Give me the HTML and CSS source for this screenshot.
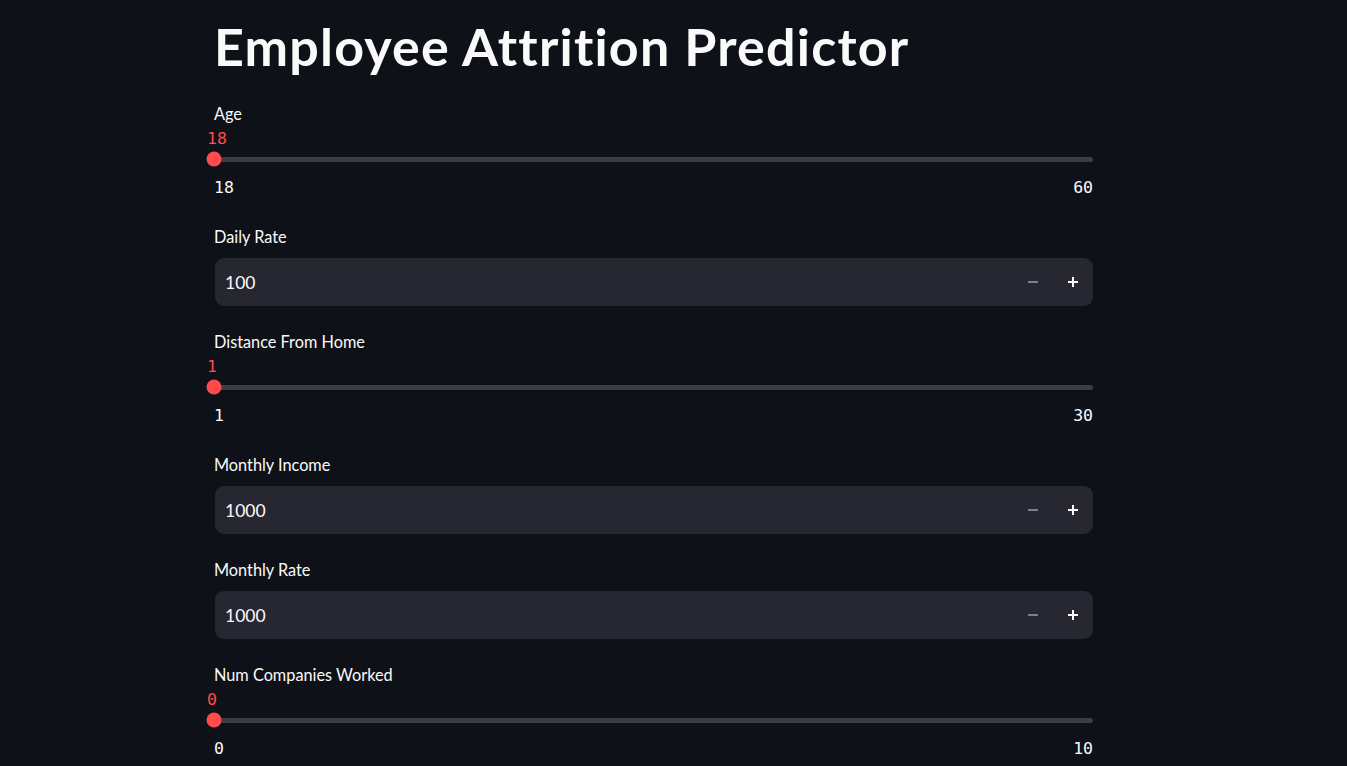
FILE: index.html
```html
<!DOCTYPE html>
<html lang="en">
<head>
<meta charset="utf-8">
<title>Employee Attrition Predictor</title>
<link rel="stylesheet" href="styles.css">
</head>
<body>
<main class="app">
  <h1 class="title">Employee Attrition Predictor</h1>

  <section class="widget slider-widget">
    <div class="label">Age</div>
    <div class="slider-value">18</div>
    <div class="track-row"><div class="track"><div class="thumb"></div></div></div>
    <div class="minmax"><span>18</span><span>60</span></div>
  </section>

  <section class="widget number-widget">
    <div class="label">Daily Rate</div>
    <div class="number-input">
      <span class="num-value">100</span>
      <span class="step step-minus"><svg width="12" height="12" viewBox="0 0 12 12"><rect x="1" y="5" width="10" height="2" fill="currentColor"/></svg></span>
      <span class="step step-plus"><svg width="12" height="12" viewBox="0 0 12 12"><rect x="1" y="5" width="10" height="2" fill="currentColor"/><rect x="5" y="1" width="2" height="10" fill="currentColor"/></svg></span>
    </div>
  </section>

  <section class="widget slider-widget">
    <div class="label">Distance From Home</div>
    <div class="slider-value">1</div>
    <div class="track-row"><div class="track"><div class="thumb"></div></div></div>
    <div class="minmax"><span>1</span><span>30</span></div>
  </section>

  <section class="widget number-widget">
    <div class="label">Monthly Income</div>
    <div class="number-input">
      <span class="num-value">1000</span>
      <span class="step step-minus"><svg width="12" height="12" viewBox="0 0 12 12"><rect x="1" y="5" width="10" height="2" fill="currentColor"/></svg></span>
      <span class="step step-plus"><svg width="12" height="12" viewBox="0 0 12 12"><rect x="1" y="5" width="10" height="2" fill="currentColor"/><rect x="5" y="1" width="2" height="10" fill="currentColor"/></svg></span>
    </div>
  </section>

  <section class="widget number-widget">
    <div class="label">Monthly Rate</div>
    <div class="number-input">
      <span class="num-value">1000</span>
      <span class="step step-minus"><svg width="12" height="12" viewBox="0 0 12 12"><rect x="1" y="5" width="10" height="2" fill="currentColor"/></svg></span>
      <span class="step step-plus"><svg width="12" height="12" viewBox="0 0 12 12"><rect x="1" y="5" width="10" height="2" fill="currentColor"/><rect x="5" y="1" width="2" height="10" fill="currentColor"/></svg></span>
    </div>
  </section>

  <section class="widget slider-widget">
    <div class="label">Num Companies Worked</div>
    <div class="slider-value">0</div>
    <div class="track-row"><div class="track"><div class="thumb"></div></div></div>
    <div class="minmax"><span>0</span><span>10</span></div>
  </section>
</main>
</body>
</html>
```

FILE: styles.css
```css
html, body {
  margin: 0;
  padding: 0;
  background: #0e1117;
  color: #fafafa;
  font-family: "Lato", "Noto Sans", "Liberation Sans", sans-serif;
  overflow: hidden;
}

.app {
  width: 879px;
  margin-left: 214px;
  display: flex;
  flex-direction: column;
}

.title {
  margin: 0;
  padding-top: 14px;
  height: 104px;
  box-sizing: border-box;
  font-size: 52px;
  line-height: 64px;
  font-weight: 700;
  letter-spacing: 1.2px;
  color: #fafafa;
}

.widget {
  display: flex;
  flex-direction: column;
}

.label {
  height: 20px;
  line-height: 20px;
  font-size: 16.3px;
  color: #fafafa;
}

.slider-widget {
  margin-bottom: 29px;
}

.slider-value {
  margin-top: 5px;
  margin-left: -7px;
  height: 20px;
  line-height: 20px;
  font-family: "DejaVu Sans Mono", "Liberation Mono", monospace;
  font-size: 16.5px;
  color: #ff4b4b;
}

.track-row {
  height: 20px;
  display: flex;
  align-items: center;
}

.track {
  position: relative;
  width: 100%;
  height: 5px;
  border-radius: 3px;
  background: #3a3c46;
}

.thumb {
  position: absolute;
  left: 0;
  top: 50%;
  width: 15px;
  height: 15px;
  border-radius: 50%;
  background: #ff4b4b;
  transform: translate(-50%, -50%);
}

.minmax {
  margin-top: 9px;
  height: 20px;
  line-height: 20px;
  display: flex;
  justify-content: space-between;
  font-family: "DejaVu Sans Mono", "Liberation Mono", monospace;
  font-size: 16.5px;
  color: #fafafa;
}

.number-widget {
  margin-bottom: 26px;
}

.number-input {
  margin-top: 11px;
  margin-left: 1px;
  height: 48px;
  border-radius: 9px;
  background: #262730;
  display: flex;
  align-items: center;
}

.num-value {
  flex: 1;
  padding-left: 10px;
  font-size: 17.5px;
  color: #fafafa;
}

.step {
  width: 40px;
  height: 48px;
  display: flex;
  align-items: center;
  justify-content: center;
}

.step-minus {
  color: #7d808c;
}

.step-plus {
  color: #fafafa;
}
```
